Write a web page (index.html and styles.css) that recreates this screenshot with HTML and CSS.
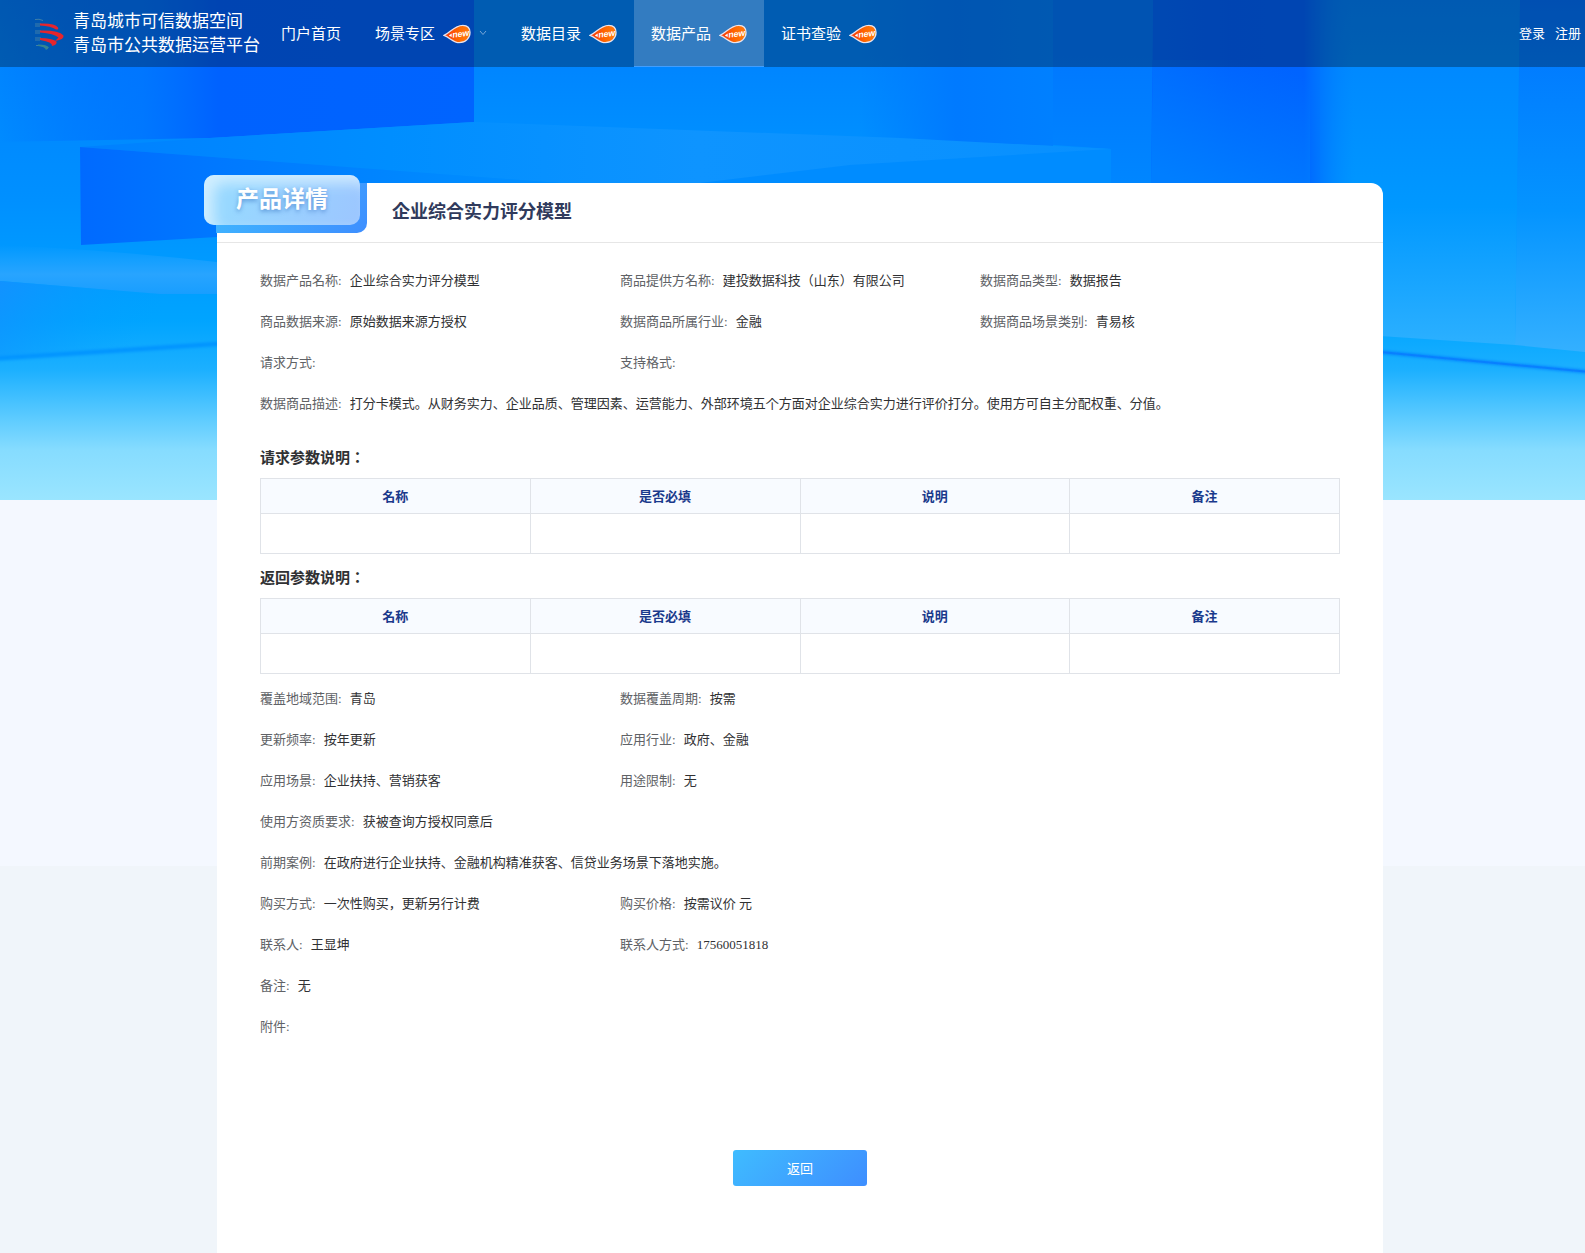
FILE: index.html
```html
<!DOCTYPE html>
<html lang="en">
<head>
  <meta charset="UTF-8">
  <meta name="viewport" content="width=device-width, initial-scale=1.0">
  <title>产品详情</title>
  <link rel="stylesheet" href="styles.css">
</head>
<body>

  <!-- Banner background -->
  <svg class="banner" viewBox="0 0 1585 500" preserveAspectRatio="none" aria-hidden="true">
    <defs>
      <linearGradient id="sky" x1="0" y1="0" x2="0" y2="1">
        <stop offset="0" stop-color="#007eff"/>
        <stop offset="0.4" stop-color="#0090ff"/>
        <stop offset="0.64" stop-color="#00a4ff"/>
        <stop offset="0.74" stop-color="#1cb0ff"/>
        <stop offset="0.84" stop-color="#5fccff"/>
        <stop offset="0.9" stop-color="#86dcff"/>
        <stop offset="1" stop-color="#9ae5ff"/>
      </linearGradient>
      <linearGradient id="shadeLeft" x1="0" y1="0" x2="1" y2="0">
        <stop offset="0" stop-color="#0062ff" stop-opacity="0"/>
        <stop offset="0.3" stop-color="#0070ff" stop-opacity="0.7"/>
        <stop offset="0.46" stop-color="#0062ff"/>
        <stop offset="1" stop-color="#0064ff"/>
      </linearGradient>
      <linearGradient id="middle" x1="0" y1="0" x2="0" y2="1">
        <stop offset="0.3" stop-color="#0084ff"/>
        <stop offset="0.8" stop-color="#0090ff"/>
      </linearGradient>
      <linearGradient id="middleDark" x1="0" y1="0" x2="1" y2="0">
        <stop offset="0" stop-color="#007aff" stop-opacity="0"/>
        <stop offset="0.5" stop-color="#007aff"/>
        <stop offset="1" stop-color="#0080ff"/>
      </linearGradient>
      <linearGradient id="slabFace" x1="0" y1="0" x2="1" y2="0">
        <stop offset="0" stop-color="#006aff"/>
        <stop offset="0.25" stop-color="#007aff"/>
        <stop offset="0.6" stop-color="#008aff"/>
        <stop offset="1" stop-color="#0092ff"/>
      </linearGradient>
      <linearGradient id="slabTop" x1="0" y1="0" x2="1" y2="0">
        <stop offset="0" stop-color="#0080ff"/>
        <stop offset="0.3" stop-color="#008eff"/>
        <stop offset="0.6" stop-color="#0e94ff"/>
        <stop offset="1" stop-color="#0890ff"/>
      </linearGradient>
      <linearGradient id="column" x1="0" y1="0" x2="0" y2="1">
        <stop offset="0.3" stop-color="#0078ff"/>
        <stop offset="1" stop-color="#0086ff"/>
      </linearGradient>
      <linearGradient id="shadeRight" x1="0" y1="0" x2="1" y2="0">
        <stop offset="0" stop-color="#0068ff"/>
        <stop offset="0.4" stop-color="#0062ff"/>
        <stop offset="0.75" stop-color="#0064ff"/>
        <stop offset="1" stop-color="#0084ff" stop-opacity="0"/>
      </linearGradient>
      <linearGradient id="fadeDown" x1="0.7" y1="0" x2="0.2" y2="1">
        <stop offset="0" stop-color="#007eff" stop-opacity="0"/>
        <stop offset="1" stop-color="#007eff"/>
      </linearGradient>
      <linearGradient id="wallMid" x1="0" y1="0" x2="0" y2="1">
        <stop offset="0" stop-color="#0082ff"/>
        <stop offset="0.6" stop-color="#0098ff"/>
        <stop offset="1" stop-color="#2cb0ff"/>
      </linearGradient>
      <linearGradient id="wallRight" x1="0" y1="0" x2="0" y2="1">
        <stop offset="0" stop-color="#0072ff"/>
        <stop offset="0.6" stop-color="#0494ff"/>
        <stop offset="1" stop-color="#34b0ff"/>
      </linearGradient>
      <linearGradient id="band" x1="0" y1="0" x2="0" y2="1">
        <stop offset="0" stop-color="#28a4ff" stop-opacity="0"/>
        <stop offset="0.6" stop-color="#28a4ff"/>
        <stop offset="1" stop-color="#189eff"/>
      </linearGradient>
      <linearGradient id="bandLow" x1="0" y1="0" x2="1" y2="0.3">
        <stop offset="0" stop-color="#1292ff"/>
        <stop offset="0.8" stop-color="#00a0ff" stop-opacity="0"/>
      </linearGradient>
      <filter id="soft" x="-10%" y="-50%" width="120%" height="200%">
        <feGaussianBlur stdDeviation="1.500"/>
      </filter>
    </defs>
    <rect width="1585" height="500" fill="url(#sky)"/>
    <path d="M0 0H474V122L210 138L0 142Z" fill="url(#shadeLeft)"/>
    <path d="M474 0H1153V183H474Z" fill="url(#middle)"/>
    <path d="M860 0H1053V146L860 138Z" fill="url(#middleDark)"/>
    <path d="M1053 0H1153L1151 183H1111V149L1053 145Z" fill="url(#column)"/>
    <path d="M80 147L210 138L474 122L900 138L1111 149V183H560Z" fill="url(#slabTop)"/>
    <path d="M850 165L1111 149V183H700Z" fill="#008cff"/>
    <path d="M80 147L560 183H700V200L217 237L81 245Z" fill="url(#slabFace)"/>
    <path d="M1320 0H1520L1515 345L1320 332Z" fill="url(#wallMid)"/>
    <path d="M1520 0H1585V352L1515 345Z" fill="url(#wallRight)"/>
    <path d="M1153 0H1355V183H1151Z" fill="url(#shadeRight)"/>
    <path d="M1153 60H1310V183H1151Z" fill="url(#fadeDown)"/>
    <path d="M0 245Q110 250 217 262V294H160L0 281Z" fill="url(#band)"/>
    <path d="M0 281L160 294H217V344L0 358Z" fill="url(#bandLow)"/>
    <path d="M-10 359L230 343" stroke="#0092ff" stroke-width="4" filter="url(#soft)"/>
    <path d="M1370 351L1600 373" stroke="#0880ff" stroke-width="3" filter="url(#soft)"/>
    <path d="M1370 351L1600 373" stroke="#0880ff" stroke-width="2"/>
  </svg>

  <!-- New tag shape, used in the navigation -->
  <svg class="symbols" aria-hidden="true">
    <defs>
      <linearGradient id="flame" x1="0" y1="0" x2="1" y2="0">
        <stop offset="0" stop-color="#f5350c"/>
        <stop offset="0.6" stop-color="#ff6a00"/>
        <stop offset="1" stop-color="#ff7a10"/>
      </linearGradient>
    </defs>
    <symbol id="new-tag" viewBox="0 0 29 20">
      <path d="M1 11.500C7 9 12 1 20.500 1C25.500 1 28 4 28 8.500C28 14 23.500 19 17 19C10.500 19 7 13.500 1 11.500Z" fill="url(#flame)" stroke="#e9e4ee" stroke-width="1.300"/>
      <path d="M6 11.500L9 9.500V13Z" fill="#fff"/>
    </symbol>
  </svg>

  <!-- Top navigation -->
  <header class="header">
    <a class="logo" href="#">
      <svg class="logo-icon" viewBox="0 0 30 32" aria-hidden="true">
        <g fill="none" stroke="#3f7fa8" stroke-width="1">
          <path d="M0 1.500Q4 0.500 8 2.500"/>
          <path d="M0 6H6M0 8H5M0 13H6M0 15H5M0 20H6M0 22H5"/>
          <path d="M1 27.500Q9 27 13 31"/>
        </g>
        <path d="M5 5.500Q20 5 23 9.500Q24 12 21 11.500Q16 8 5 7.500Z" fill="#e6252d"/>
        <path d="M5 12.500Q24 12 28.500 17.500Q29.500 21.500 20 23L23.500 19.500Q19 15.500 5 14.500Z" fill="#e6252d"/>
        <path d="M5 20Q17 20 21.500 23.500Q22.500 26.500 17 28Q18 24 5 22Z" fill="#e6252d"/>
        <path d="M3 26.500Q12 26.500 14 29.500L11 32Q10 28.500 3 28Z" fill="#35848f"/>
      </svg>
      <span class="logo-text">青岛城市可信数据空间<br>青岛市公共数据运营平台</span>
    </a>

    <nav class="nav">
      <a class="nav-link" href="#">门户首页</a>
      <a class="nav-link" href="#">场景专区
        <svg class="new-icon" viewBox="0 0 29 20"><use href="#new-tag"/><text x="10" y="14" transform="rotate(-8 10 14)">new</text></svg>
        <svg class="arrow" viewBox="0 0 8 6"><path d="M1 1L4 4.500L7 1" fill="none" stroke="#7aa7d8"/></svg>
      </a>
      <a class="nav-link" href="#">数据目录
        <svg class="new-icon" viewBox="0 0 29 20"><use href="#new-tag"/><text x="10" y="14" transform="rotate(-8 10 14)">new</text></svg>
      </a>
      <a class="nav-link active" href="#">数据产品
        <svg class="new-icon" viewBox="0 0 29 20"><use href="#new-tag"/><text x="10" y="14" transform="rotate(-8 10 14)">new</text></svg>
      </a>
      <a class="nav-link" href="#">证书查验
        <svg class="new-icon" viewBox="0 0 29 20"><use href="#new-tag"/><text x="10" y="14" transform="rotate(-8 10 14)">new</text></svg>
      </a>
    </nav>

    <div class="user-links">
      <a href="#">登录</a>
      <a href="#">注册</a>
    </div>
  </header>

  <!-- Product detail -->
  <main class="card">
    <div class="badge"><span class="badge-text">产品详情</span></div>
    <div class="card-header">
      <h1>企业综合实力评分模型</h1>
    </div>

    <div class="card-body">
      <dl class="info">
        <div class="item"><dt>数据产品名称:</dt><dd>企业综合实力评分模型</dd></div>
        <div class="item"><dt>商品提供方名称:</dt><dd>建投数据科技（山东）有限公司</dd></div>
        <div class="item"><dt>数据商品类型:</dt><dd>数据报告</dd></div>
        <div class="item"><dt>商品数据来源:</dt><dd>原始数据来源方授权</dd></div>
        <div class="item"><dt>数据商品所属行业:</dt><dd>金融</dd></div>
        <div class="item"><dt>数据商品场景类别:</dt><dd>青易核</dd></div>
        <div class="item"><dt>请求方式:</dt><dd></dd></div>
        <div class="item item-rest"><dt>支持格式:</dt><dd></dd></div>
        <div class="item item-full"><dt>数据商品描述:</dt><dd>打分卡模式。从财务实力、企业品质、管理因素、运营能力、外部环境五个方面对企业综合实力进行评价打分。使用方可自主分配权重、分值。</dd></div>
      </dl>

      <h2 class="first">请求参数说明：</h2>
      <table class="params">
        <thead>
          <tr><th>名称</th><th>是否必填</th><th>说明</th><th>备注</th></tr>
        </thead>
        <tbody>
          <tr><td></td><td></td><td></td><td></td></tr>
        </tbody>
      </table>

      <h2>返回参数说明：</h2>
      <table class="params">
        <thead>
          <tr><th>名称</th><th>是否必填</th><th>说明</th><th>备注</th></tr>
        </thead>
        <tbody>
          <tr><td></td><td></td><td></td><td></td></tr>
        </tbody>
      </table>

      <dl class="info info-more">
        <div class="item"><dt>覆盖地域范围:</dt><dd>青岛</dd></div>
        <div class="item item-rest"><dt>数据覆盖周期:</dt><dd>按需</dd></div>
        <div class="item"><dt>更新频率:</dt><dd>按年更新</dd></div>
        <div class="item item-rest"><dt>应用行业:</dt><dd>政府、金融</dd></div>
        <div class="item"><dt>应用场景:</dt><dd>企业扶持、营销获客</dd></div>
        <div class="item item-rest"><dt>用途限制:</dt><dd>无</dd></div>
        <div class="item item-full"><dt>使用方资质要求:</dt><dd>获被查询方授权同意后</dd></div>
        <div class="item item-full"><dt>前期案例:</dt><dd>在政府进行企业扶持、金融机构精准获客、信贷业务场景下落地实施。</dd></div>
        <div class="item"><dt>购买方式:</dt><dd>一次性购买，更新另行计费</dd></div>
        <div class="item item-rest"><dt>购买价格:</dt><dd>按需议价 元</dd></div>
        <div class="item"><dt>联系人:</dt><dd>王显坤</dd></div>
        <div class="item item-rest"><dt>联系人方式:</dt><dd>17560051818</dd></div>
        <div class="item item-full"><dt>备注:</dt><dd>无</dd></div>
        <div class="item item-full"><dt>附件:</dt><dd></dd></div>
      </dl>

      <button class="back-btn" type="button">返回</button>
    </div>
  </main>

</body>
</html>
```

FILE: styles.css
```css
* {
  box-sizing: border-box;
}

body {
  margin: 0;
  min-height: 100vh;
  display: flex;
  flex-direction: column;
  font-family: "Liberation Serif", "Noto Sans CJK JP", serif;
  font-size: 13px;
  color: #303133;
  background: linear-gradient(#f4f8ff 866px, #f0f5fa 866px);
}

a {
  color: #fff;
  text-decoration: none;
}

.banner {
  position: absolute;
  top: 0;
  left: 0;
  z-index: -1;
  width: 100%;
  height: 500px;
}

.symbols {
  position: absolute;
  width: 0;
  height: 0;
}

/* Header */
.header {
  display: flex;
  height: 67px;
  padding: 0 4px 0 35px;
  background-color: rgba(0, 0, 0, 0.3);
}

.logo {
  display: flex;
  align-items: center;
  gap: 8px;
  margin-right: 4px;
}

.logo-icon {
  width: 30px;
  height: 32px;
}

.logo-text {
  padding-top: 1px;
  font-size: 17px;
  line-height: 24px;
  white-space: nowrap;
}

.nav {
  display: flex;
}

.nav-link {
  display: flex;
  align-items: center;
  gap: 8px;
  padding: 0 17px 2px;
  font-size: 15px;
  white-space: nowrap;
}

.nav-link.active {
  background-color: rgba(255, 255, 255, 0.2);
  box-shadow: inset 0 -1px #409eff;
}

.new-icon {
  width: 28px;
  height: 20px;
  margin-top: 2px;
  font: italic bold 9px "Liberation Sans", sans-serif;
  fill: #fff;
}

.arrow {
  width: 8px;
  height: 6px;
}

.user-links {
  display: flex;
  align-items: center;
  gap: 10px;
  margin-left: auto;
  padding-bottom: 2px;
}

/* Card */
.card {
  position: relative;
  flex: 1;
  margin: 116px 202px 0 217px;
  background-color: #fff;
  border-radius: 0 12px 0 0;
}

.badge {
  position: absolute;
  top: 0;
  left: -1px;
  width: 151px;
  height: 50px;
  border-radius: 0 0 10px 0;
  background: linear-gradient(135deg, #3fbcff, #3e8eff);
}

.badge-text {
  position: absolute;
  top: -8px;
  left: -12px;
  width: 156px;
  height: 50px;
  border-radius: 10px;
  background: linear-gradient(110deg, #98d8ff 20%, #9cc6ff);
  box-shadow: inset 10px 8px 14px rgba(222, 244, 255, 0.8);
  color: #fff;
  font-size: 23px;
  font-weight: bold;
  line-height: 50px;
  text-align: center;
  text-shadow: 0 2px 4px rgba(50, 110, 190, 0.6);
}

.card-header {
  display: flex;
  align-items: center;
  height: 60px;
  padding: 0 0 2px 175px;
  border-bottom: 1px solid #e6e6e6;
}

h1 {
  margin: 0;
  font-size: 18px;
  line-height: 24px;
  color: #303a5c;
}

.card-body {
  padding: 17px 43px 66px;
}

/* Label and value rows */
.info {
  display: grid;
  grid-template-columns: repeat(3, 1fr);
  margin: 0;
}

.info-more {
  margin-top: 4px;
}

.item {
  display: flex;
  gap: 8px;
  line-height: 41px;
}

.item-rest {
  grid-column: span 2;
}

.item-full {
  grid-column: 1 / -1;
}

.item dt {
  color: #606266;
  white-space: nowrap;
}

.item dd {
  margin: 0;
}

/* Parameter tables */
h2 {
  margin: 4px 0 0;
  font-size: 15px;
  line-height: 40px;
}

h2.first {
  margin-top: 14px;
}

.params {
  width: 100%;
  table-layout: fixed;
  border-collapse: collapse;
}

.params th,
.params td {
  height: 40px;
  padding: 0;
  border: 1px solid #e0e3e8;
}

.params th {
  height: 35px;
  padding-bottom: 2px;
  background-color: #f8fbff;
  color: #1b3a8c;
}

.back-btn {
  display: block;
  width: 134px;
  height: 36px;
  margin: 103px auto 0;
  padding-bottom: 3px;
  border: none;
  border-radius: 3px;
  background: linear-gradient(135deg, #3fbcff, #3e8eff);
  color: #fff;
  font-family: inherit;
  font-size: 13px;
  cursor: pointer;
}
```
